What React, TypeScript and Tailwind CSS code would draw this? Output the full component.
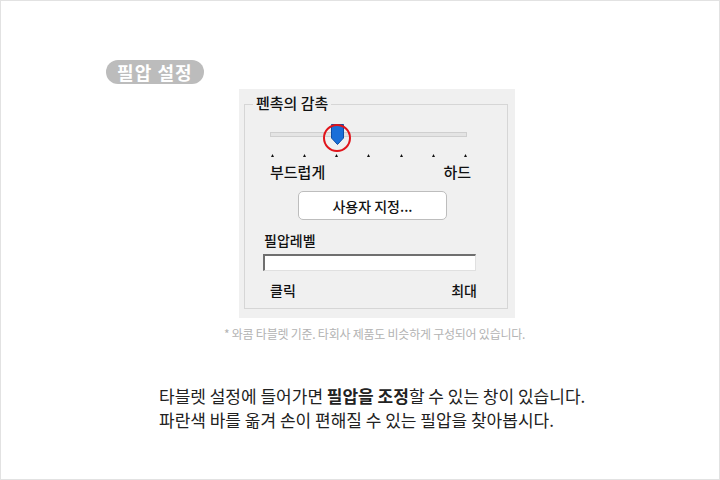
import React from "react";

const ticks = [0, 1, 2, 3, 4, 5, 6];

const App = () => {
    return (
        <div
            className="w-[720px] h-[480px] bg-white border border-[#e2e2e2] flex flex-col"
            style={{ fontFamily: '"Noto Sans CJK KR", "Noto Sans", sans-serif' }}
        >
            {/* title pill */}
            <div className="mt-[59px] ml-[105px] self-start h-[24px] px-[11px] rounded-full bg-[#bcbcbc] text-white font-bold text-[18px] leading-[24px] tracking-[0.06em]">
                필압 설정
            </div>

            {/* settings panel */}
            <div className="mt-[5px] ml-[238px] w-[276px] h-[229px] bg-[#f0f0f0] pt-[15px] pl-[5px] pr-[7px] pb-[9px]">
                <div className="relative h-full border border-[#d6d6d6] text-[#111] font-medium">
                    <div className="absolute -top-[12px] left-[8px] px-[3px] bg-[#f0f0f0] text-[15px] leading-[20px]">
                        펜촉의 감촉
                    </div>

                    {/* slider */}
                    <div className="relative ml-[25px] mt-[19px] w-[197px] h-[24px]">
                        <div className="absolute left-0 right-0 top-[8px] h-[5px] bg-[#e4e4e4] border border-[#cfcfcf]" />
                        <svg className="absolute left-[61px] top-0" width="13" height="21" viewBox="0 0 13 21">
                            <path d="M0.5 0.5 H12.5 V14 L6.5 20.5 L0.5 14 Z" fill="#1b6fd8" stroke="#0f4ea3" />
                        </svg>
                        <div className="absolute left-[53px] top-[0px] w-[28px] h-[28px] rounded-full border-2 border-[#e0141b]" />
                    </div>

                    {/* ticks */}
                    <div className="ml-[26px] w-[196px] mt-[6px] flex justify-between">
                        {ticks.map((t) => (
                            <svg key={t} width="3" height="3" viewBox="0 0 3 3">
                                <path d="M1.5 0 L3 3 L0 3 Z" fill="#111" />
                            </svg>
                        ))}
                    </div>

                    <div className="ml-[25px] mr-[36px] mt-[5px] flex justify-between text-[15px] leading-[20px]">
                        <span>부드럽게</span>
                        <span>하드</span>
                    </div>

                    <button className="ml-[53px] mt-[9px] w-[149px] h-[29px] bg-white border border-[#bdbdbd] rounded-[5px] text-[14px] leading-[20px] text-[#111] font-medium">
                        사용자 지정...
                    </button>

                    <div className="ml-[19px] mt-[11px] text-[14px] leading-[18px]">필압레벨</div>

                    <div className="ml-[18px] mt-[5px] w-[213px] h-[17px] bg-white border-t-2 border-l-2 border-[#6f6f6f] border-b border-r border-b-[#e0e0e0] border-r-[#e0e0e0]" />

                    <div className="ml-[25px] mr-[30px] mt-[10px] flex justify-between text-[14px] leading-[18px]">
                        <span>클릭</span>
                        <span>최대</span>
                    </div>
                </div>
            </div>

            <div className="mt-[8px] ml-[223px] text-[12px] leading-[16px] text-[#b3b3b3] tracking-[-0.02em]">
                * 와콤 타블렛 기준. 타회사 제품도 비슷하게 구성되어 있습니다.
            </div>

            <div className="mt-[42px] ml-[158px] text-[17px] leading-[24px] text-[#222]">
                <p>
                    타블렛 설정에 들어가면 <b>필압을 조정</b>할 수 있는 창이 있습니다.
                </p>
                <p>파란색 바를 옮겨 손이 편해질 수 있는 필압을 찾아봅시다.</p>
            </div>
        </div>
    );
};

export default App;
